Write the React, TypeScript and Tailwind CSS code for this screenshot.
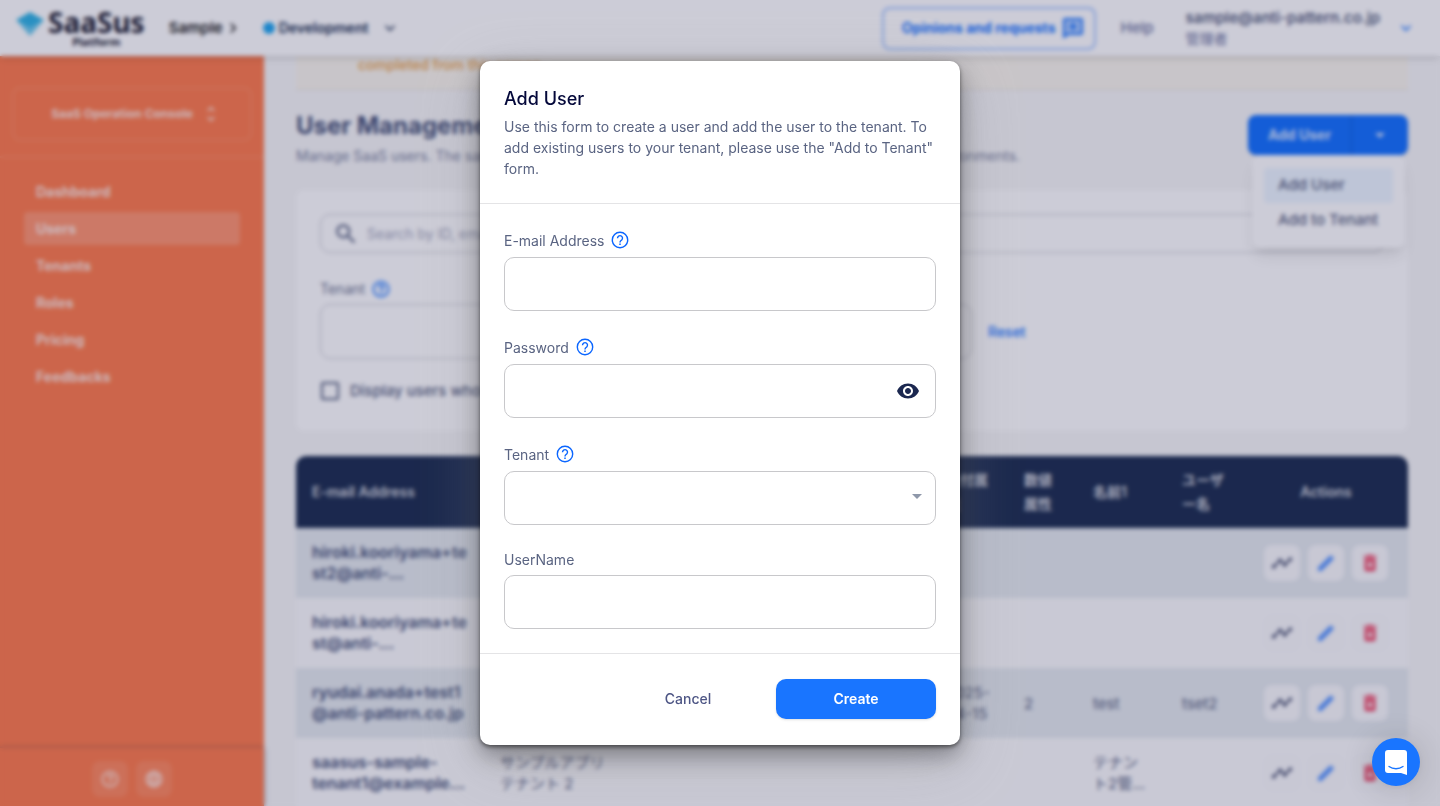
import type { ReactNode } from "react";
import {
    MdArrowDropDown,
    MdCheckBoxOutlineBlank,
    MdChevronRight,
    MdDeleteForever,
    MdExpandMore,
    MdHelpOutline,
    MdLanguage,
    MdSearch,
    MdTimeline,
    MdUnfoldMore,
    MdVisibility,
} from "react-icons/md";

type UserRow = {
    email: string;
    tenant: string;
    date: string;
    count: string;
    name: string;
    userName: string;
};

const navItems = ["Dashboard", "Users", "Tenants", "Roles", "Pricing", "Feedbacks"];

const users: UserRow[] = [
    { email: "hiroki.kooriyama+te\nst2@anti-...", tenant: "", date: "", count: "", name: "", userName: "" },
    { email: "hiroki.kooriyama+te\nst@anti-...", tenant: "", date: "", count: "", name: "", userName: "" },
    { email: "ryudai.anada+test1\n@anti-pattern.co.jp", tenant: "", date: "2025-\n04-15", count: "2", name: "test", userName: "tset2" },
    { email: "saasus-sample-\ntenant1@example...", tenant: "サンプルアプリ\nテナント 2", date: "", count: "", name: "テナン\nト2管...", userName: "" },
];

const HelpIcon = () => (
    <svg viewBox="0 0 20 20" className="w-5 h-5 text-[#0b66ff]" fill="none" stroke="currentColor" aria-hidden="true">
        <circle cx="10" cy="10" r="7.700" strokeWidth="1.400" />
        <path d="M7.500 8.200a2.500 2.500 0 1 1 4.200 1.800c-.9.8-1.700 1.300-1.700 2.400" strokeWidth="1.400" />
        <path d="M10 13.500v1.500" strokeWidth="1.500" />
    </svg>
);

const PencilIcon = () => (
    <svg viewBox="0 0 20 20" className="w-5 h-5 text-[#5b98ff]" fill="currentColor" aria-hidden="true">
        <path d="M2 18v-3.500L13.600 2.900a1.500 1.500 0 0 1 2.100 0l1.400 1.400a1.500 1.500 0 0 1 0 2.100L5.500 18Z" />
    </svg>
);

const ReviewIcon = () => (
    <svg viewBox="0 0 20 20" className="w-5 h-5" fill="currentColor" aria-hidden="true">
        <path d="M2 1h16a1 1 0 0 1 1 1v13a1 1 0 0 1-1 1H5l-4 3V2a1 1 0 0 1 1-1Z" fillOpacity="0.35" stroke="currentColor" strokeWidth="2" />
        <path d="m10 3.500 1.300 3.700L15 8.500l-3.700 1.300L10 13.500l-1.300-3.700L5 8.500l3.700-1.300Z" />
    </svg>
);

const Logo = () => (
    <a href="#" className="flex items-start gap-1 text-[#223] font-['Noto_Sans',sans-serif]">
        <svg viewBox="0 0 28 24" className="w-7 h-6 mt-1" aria-hidden="true">
            <path d="M14 0 28 8 14 16 0 8Z" fill="#33b5e5" />
            <path d="M0 8 14 16 28 8 14 24Z" fill="#6fcbee" />
        </svg>
        <span className="flex flex-col items-center">
            <span className="text-[28px] leading-7 font-bold">SaaSus</span>
            <span className="text-[11px] leading-3 font-bold">Platform</span>
        </span>
    </a>
);

const Header = () => (
    <header className="relative z-10 flex items-center h-14 px-4 bg-white shadow-md shrink-0">
        <Logo />
        <button className="flex items-center ml-6 text-[15px] font-semibold text-[#222]">
            Sample
            <MdChevronRight size={20} />
        </button>
        <button className="flex items-center ml-5 text-sm font-semibold text-[#223354]">
            <span className="w-3 h-3 mr-1 rounded-full bg-[#24a8f0]" />
            Development
            <MdExpandMore size={20} className="ml-3" />
        </button>
        <button className="flex items-center gap-2 h-[43px] ml-auto pl-[18px] pr-[11px] rounded-lg border-2 border-[#a5c6ff] text-sm font-bold text-[#1975ff]">
            Opinions and requests
            <ReviewIcon />
        </button>
        <a href="#" className="ml-6 text-[15px] font-medium text-[#6e759f]">
            Help
        </a>
        <button className="flex items-center ml-8 mr-2 text-left text-sm text-[#6e759f]">
            <span>
                <span className="block text-[15px] font-semibold leading-[21px] text-[#5a6482]">sample@anti-pattern.co.jp</span>
                <span className="block leading-[21px]">管理者</span>
            </span>
            <MdExpandMore size={20} className="ml-4 text-[#1975ff]" />
        </button>
    </header>
);

const Sidebar = () => (
    <aside className="flex flex-col w-[264px] shrink-0 bg-[#ff7f50] text-white/80">
        <div className="px-3 pt-[31px] pb-[15px] border-b-2 border-white/10">
            <button className="flex items-center justify-center gap-2 w-full h-[54px] pl-2 rounded-lg border-2 border-white/10 text-xs font-bold">
                SaaS Operation Console
                <MdUnfoldMore size={20} />
            </button>
        </div>
        <nav className="flex flex-col gap-1 px-6 pt-[17px]">
            {navItems.map((item) => (
                <a
                    key={item}
                    href="#"
                    className={
                        item === "Users"
                            ? "flex items-center h-[33px] px-3 rounded text-sm font-bold bg-white/20"
                            : "flex items-center h-[33px] px-3 rounded text-sm font-bold"
                    }
                >
                    {item}
                </a>
            ))}
        </nav>
        <div className="flex justify-center gap-2 h-[58px] pt-[13px] mt-auto shadow-[0_0_4px_rgba(34,51,84,0.5)]">
            <button aria-label="Help" className="flex items-center justify-center w-9 h-9 rounded-lg bg-white/10">
                <MdHelpOutline size={20} />
            </button>
            <button aria-label="Language" className="flex items-center justify-center w-9 h-9 rounded-lg bg-white/10">
                <MdLanguage size={20} />
            </button>
        </div>
    </aside>
);

const AddUserMenu = () => (
    <div className="relative">
        <div className="flex h-10 rounded-lg overflow-hidden bg-[#1975ff] text-white/80 text-sm font-bold shadow">
            <button className="w-[103px]">Add User</button>
            <button aria-label="More actions" className="flex items-center justify-center w-[57px] border-l border-[#1260d6]">
                <MdArrowDropDown size={24} />
            </button>
        </div>
        <ul className="absolute top-10 left-1 right-[3px] px-3 pt-[13px] pb-[10px] rounded-lg bg-white shadow-lg text-[15px] font-medium text-[#5a6482]">
            <li>
                <button className="w-full h-[35px] px-[14px] rounded bg-[#eef7ff] text-left">Add User</button>
            </li>
            <li>
                <button className="w-full h-[35px] px-[14px] text-left">Add to Tenant</button>
            </li>
        </ul>
    </div>
);

const Filters = () => (
    <section className="px-6 pt-6 pb-7 mt-6 rounded-lg bg-white">
        <label className="flex items-center gap-2 h-[39px] px-3 rounded-[10px] border border-[#cbccd2] text-[#5a6482]">
            <MdSearch size={26} />
            <input placeholder="Search by ID, email address" className="grow text-sm outline-none placeholder:text-[#a5a9bd]" />
        </label>
        <div className="flex items-end gap-4 mt-6">
            <div className="w-[652px]">
                <label htmlFor="filter-tenant" className="flex items-center gap-1.5 h-6 text-sm text-[#6e7591]">
                    Tenant
                    <MdHelpOutline size={20} className="text-[#1975ff]" />
                </label>
                <select id="filter-tenant" className="block w-full h-[55px] mt-[3px] rounded-[10px] border border-[#cbccd2] appearance-none" />
            </div>
            <button className="h-[55px] text-sm font-medium text-[#1975ff]">Reset</button>
        </div>
        <label className="flex items-center gap-2 mt-5 text-[15px] font-medium text-[#5a6482]">
            <input type="checkbox" className="sr-only" />
            <MdCheckBoxOutlineBlank size={24} className="-ml-0.5" />
            Display users who do not belong to a tenant
        </label>
    </section>
);

const IconButton = ({ label, children }: { label: string; children: ReactNode }) => (
    <button aria-label={label} className="flex items-center justify-center w-9 h-9 rounded-lg bg-[#fafafc]">
        {children}
    </button>
);

const UserTable = () => (
    <table className="w-full mt-[25px] table-fixed rounded-t-[10px] overflow-hidden text-[15px] text-left text-[#5a6482]">
        <thead>
            <tr className="h-[72px] bg-[#223354] text-sm text-white/80 leading-6">
                <th className="w-[188px] px-4 font-semibold">E-mail Address</th>
                <th className="px-4 font-semibold">Tenant</th>
                <th className="w-[78px] px-4 font-semibold whitespace-pre">{"日付属\n性"}</th>
                <th className="w-[69px] px-4 font-semibold">数値属性</th>
                <th className="w-[89px] px-4 font-semibold">名前1</th>
                <th className="w-[78px] px-4 font-semibold whitespace-pre">{"ユーザ\nー名"}</th>
                <th className="w-[164px] px-4 font-semibold text-center">Actions</th>
            </tr>
        </thead>
        <tbody>
            {users.map((user) => (
                <tr key={user.email} className="h-[70px] leading-[21px] whitespace-pre odd:bg-[#e6ebef] even:bg-[#fcfcfd]">
                    <td className="px-4 text-base leading-[21px] font-semibold text-[#49557a]">{user.email}</td>
                    <td className="px-4">{user.tenant}</td>
                    <td className="px-4">{user.date}</td>
                    <td className="px-4">{user.count}</td>
                    <td className="px-4">{user.name}</td>
                    <td className="px-4">{user.userName}</td>
                    <td>
                        <div className="flex justify-center gap-2">
                            <IconButton label="Activity">
                                <MdTimeline size={22} className="text-[#3d4668]" />
                            </IconButton>
                            <IconButton label="Edit">
                                <PencilIcon />
                            </IconButton>
                            <IconButton label="Delete">
                                <MdDeleteForever size={22} className="text-[#f04a68]" />
                            </IconButton>
                        </div>
                    </td>
                </tr>
            ))}
        </tbody>
    </table>
);

const Field = ({ id, label, help, children }: { id: string; label: string; help?: boolean; children: ReactNode }) => (
    <div>
        <div className="flex items-center gap-1.5 mb-[5px]">
            <label htmlFor={id} className="text-sm leading-[21px] text-[#5a6482]">
                {label}
            </label>
            {help && (
                <button type="button" aria-label={`About ${label}`} className="flex items-center h-6">
                    <HelpIcon />
                </button>
            )}
        </div>
        <div className="relative">{children}</div>
    </div>
);

const inputClass = "block w-full h-[54px] px-4 rounded-[10px] border border-[#c8c8cb] bg-white text-sm outline-none appearance-none";

const AddUserDialog = () => (
    <form
        role="dialog"
        aria-labelledby="dialog-title"
        className="w-[480px] rounded-[10px] bg-white shadow-[0_2px_4px_rgba(0,0,0,0.5),0_10px_24px_rgba(0,0,0,0.35),0_16px_60px_rgba(150,150,150,0.35)]"
    >
        <div className="p-6 border-b border-[#e4e4e6]">
            <h2 id="dialog-title" className="text-lg leading-7 font-medium text-[#04083a]">
                Add User
            </h2>
            <p className="mt-[3px] text-sm leading-[21px] text-[#5a6482]">
                Use this form to create a user and add the user to the tenant. To add existing users to your tenant, please
                use the "Add to Tenant" form.
            </p>
        </div>
        <div className="flex flex-col gap-6 p-6">
            <Field id="email" label="E-mail Address" help>
                <input id="email" type="email" className={inputClass} />
            </Field>
            <Field id="password" label="Password" help>
                <input id="password" type="password" className={inputClass} />
                <button type="button" aria-label="Show password" className="absolute right-4 top-[15px] text-[#1c2850]">
                    <MdVisibility size={24} />
                </button>
            </Field>
            <Field id="tenant" label="Tenant" help>
                <select id="tenant" className={inputClass} />
                <MdArrowDropDown size={24} className="absolute right-[7px] top-[13px] text-[#8f98aa] pointer-events-none" />
            </Field>
            <Field id="username" label="UserName">
                <input id="username" className={inputClass} />
            </Field>
        </div>
        <div className="flex justify-end gap-2 px-6 pt-[25px] pb-[26px] border-t border-[#e4e4e6] text-sm">
            <button type="button" className="w-40 h-10 font-medium text-[#4e5685]">
                Cancel
            </button>
            <button type="submit" className="w-40 h-10 rounded-[10px] bg-[#1975ff] font-semibold text-white shadow">
                Create
            </button>
        </div>
    </form>
);

const ChatButton = () => (
    <button
        aria-label="Open chat"
        className="fixed right-5 bottom-5 z-30 flex items-center justify-center w-12 h-12 rounded-full bg-[#1975ff] shadow-[0_1px_6px_rgba(0,0,0,0.06),0_2px_32px_rgba(0,0,0,0.16)]"
    >
        <svg viewBox="0 0 22 25" className="w-[22px] h-[25px]" aria-hidden="true">
            <path d="M3 0h16a3 3 0 0 1 3 3v22l-6-2H3a3 3 0 0 1-3-3V3a3 3 0 0 1 3-3Z" fill="#fff" />
            <path d="M4 16.500c4 3 10 3 14 0" fill="none" stroke="#1975ff" strokeWidth="1.300" strokeLinecap="round" />
        </svg>
    </button>
);

export default function App() {
    return (
        <div className="h-screen overflow-hidden bg-[#f8f8f8] font-[Inter,'Noto_Sans_CJK_JP',sans-serif]">
            <div className="flex flex-col h-full">
                <Header />
                <div className="flex grow min-h-0">
                    <Sidebar />
                    <main className="grow min-w-0 px-8 overflow-hidden">
                        <p className="h-[34px] pl-[62px] border-b border-[#eae4da] bg-[#fbf7ee] text-sm leading-[17px] font-medium text-[#e8a24a]">
                            completed from this screen.
                        </p>
                        <div className="flex items-start justify-between pt-[25px]">
                            <div>
                                <h1 className="text-2xl leading-[22px] font-bold text-[#49557a]">User Management</h1>
                                <p className="mt-2 text-sm leading-[21px] text-[#7d859f]">
                                    Manage SaaS users. The same users can be registered for tenants across each of the different environments.
                                </p>
                            </div>
                            <AddUserMenu />
                        </div>
                        <Filters />
                        <UserTable />
                    </main>
                </div>
            </div>
            <div className="fixed inset-0 z-20 flex items-center justify-center bg-[#010137]/20 backdrop-blur-[2px]">
                <AddUserDialog />
            </div>
            <ChatButton />
        </div>
    );
}
